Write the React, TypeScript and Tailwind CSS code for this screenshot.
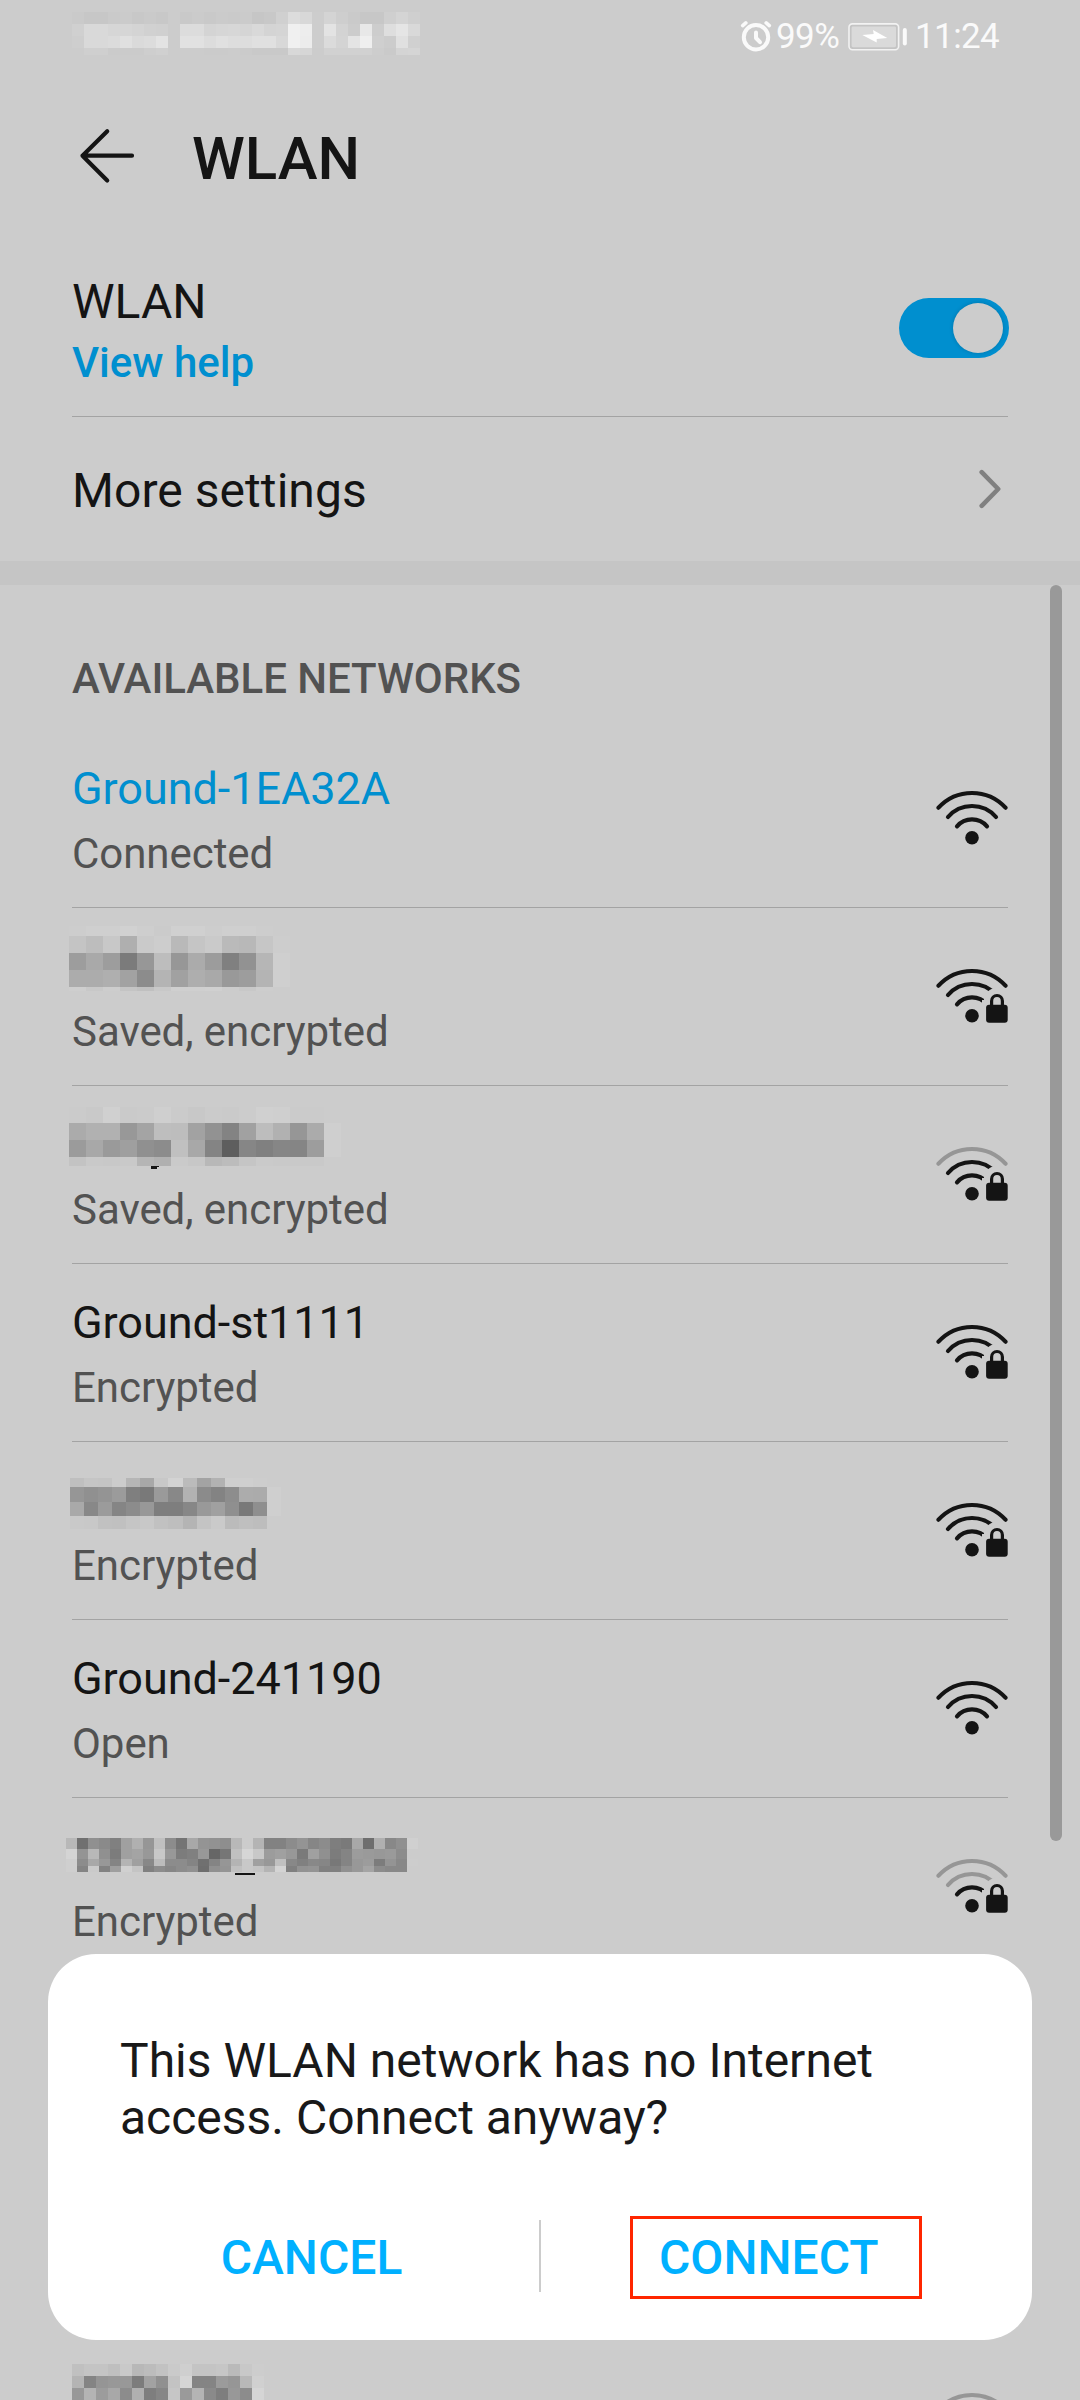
import React from "react";

type MosaicRow = { y: number; h: number; tones: string };
type MosaicData = { x: number; cell: number; rows: MosaicRow[]; marks?: { x: number; y: number; w: number; h: number }[] };

const statusMosaic: MosaicData = {
  x: 0,
  cell: 12,
  rows: [
    { y: 12, h: 12, tones: "ca c7 c7 ca cb c8 ca c8 cc c9 cb c9 cb ca cb c6 c8 d0 dc d8 cd d4 ce ca c7 c7 cf d4 cf" },
    { y: 24, h: 12, tones: "d0 d9 d9 d6 d6 d4 d1 d0 cc dc dc d4 d6 d7 d5 d9 d4 d5 f0 ed cd e3 d3 cc e8 cd de e5 d9" },
    { y: 36, h: 12, tones: "ce d9 d9 db e0 da dc e3 cc e1 e1 dc e0 dd dd e0 e0 d8 f0 ec cd db d4 e4 ef cf cc e0 d0" },
    { y: 48, h: 7, tones: "cc cf cf cb cb cb ce d0 cc cc cc cb cb cc cb c9 c9 c9 d8 d6 cc d1 d1 d1 d1 cd ca d4 d5" },
  ],
};

const mosaicA: MosaicData = {
  x: -3,
  cell: 17,
  rows: [
    { y: -14, h: 10, tones: "cd cf cf d1 ce cb d0 d0 cd cf cf cd cc" },
    { y: -4, h: 17, tones: "c4 bd c8 af ca cd b9 c5 ca ba b8 c6 cd" },
    { y: 13, h: 17, tones: "9d a9 9d 7b 97 bd 97 ab 9c 80 92 b6 cf" },
    { y: 30, h: 17, tones: "ac ac af a2 8c b4 a1 ae a9 99 9d b4 cf" },
    { y: 47, h: 4, tones: "ce c8 cd c4 c0 c8 cf cf d0 cc c8 cd cc" },
  ],
};

const mosaicB: MosaicData = {
  x: -3,
  cell: 17,
  rows: [
    { y: -11, h: 16, tones: "cb c9 d0 ca cb cf cb c8 cb ca cc d0 cf cb cb cc" },
    { y: 5, h: 17, tones: "ab b1 b1 98 a4 be bd a2 92 83 a1 bd b1 96 ab cf" },
    { y: 22, h: 17, tones: "9b a8 9a 9f 90 8c c0 a8 84 5e 86 80 86 85 9d cf" },
    { y: 39, h: 9, tones: "c3 c9 c8 c9 b5 b0 ca c7 b8 bc c5 ca c9 c9 c9 cc" },
  ],
  marks: [
    { x: 79, y: 48, w: 8, h: 1 },
    { x: 79, y: 49, w: 6, h: 2 },
  ],
};

const mosaicC: MosaicData = {
  x: -2,
  cell: 14.07,
  rows: [
    { y: 4, h: 9, tones: "bf c5 c4 cc b6 a8 c8 d3 bb a3 b2 cf cf cd cc" },
    { y: 13, h: 15, tones: "96 90 94 9b 7f 79 9a 88 b2 8b 83 8d ac ab cf" },
    { y: 28, h: 14, tones: "a9 88 9b 85 8c 98 7e 7e 87 99 a0 8f 79 8f cf" },
    { y: 42, h: 13, tones: "c9 c8 c1 c0 c5 c8 c1 be b4 c4 ca bb bf bd cc" },
  ],
};

const mosaicD: MosaicData = {
  x: -6,
  cell: 11,
  rows: [
    { y: 8, h: 11, tones: "b8 70 90 8a 80 a0 b0 96 c0 8c 74 a8 94 92 8e b8 cc b4 82 82 8c 94 86 8c 7e 7a a8 6e b0 88 90 d0" },
    { y: 19, h: 10, tones: "d4 94 b8 90 7c a0 a4 98 c8 98 7c 80 98 66 76 c0 d6 c8 9c a0 98 7a a0 90 7c 84 9c 9a 98 9a 8c cc" },
    { y: 29, h: 7, tones: "cf 8c a8 98 84 b4 a0 88 bc 8c 8c 84 70 84 96 b4 c8 a0 98 c0 88 80 88 86 78 84 98 9c 7c 94 88 cd" },
    { y: 36, h: 6, tones: "cf 84 ca 82 9e d0 c4 80 8c 86 8c 90 6e 90 94 c0 c8 c4 b4 d4 80 92 94 80 80 90 98 a4 8c 88 88 cc" },
  ],
  marks: [{ x: 163, y: 43, w: 20, h: 2 }],
};

const mosaicE: MosaicData = {
  x: 0,
  cell: 12,
  rows: [
    { y: 0, h: 12, tones: "c0 c4 c4 bf c9 b8 bc c2 ca cf c4 c4 c6 ba c8 cd" },
    { y: 12, h: 12, tones: "b4 84 95 98 98 7c a2 90 c3 d5 84 84 9b 96 b8 d0" },
    { y: 24, h: 12, tones: "98 b4 9c a8 8c b0 7e 86 c6 9a b4 8a 7e 98 8c d5" },
  ],
};

function Mosaic({ data }: { data: MosaicData }) {
  return (
    <svg className="block h-[54px] w-[400px] overflow-visible" shapeRendering="crispEdges" aria-hidden>
      {data.rows.map((row) =>
        row.tones.split(" ").map((t, i) => (
          <rect key={`${row.y}-${i}`} x={data.x + i * data.cell} y={row.y} width={data.cell} height={row.h} fill={`#${t}${t}${t}`} />
        )),
      )}
      {data.marks?.map((m, i) => (
        <rect key={i} x={m.x} y={m.y} width={m.w} height={m.h} fill="#141414" />
      ))}
    </svg>
  );
}

const ON = "#141414";
const DIM = "#969696";

function WifiIcon({ level, locked }: { level: number; locked: boolean }) {
  return (
    <svg className="h-[72px] w-[72px] shrink-0" viewBox="0 0 72 72" fill="none" strokeWidth="4.2" strokeLinecap="round">
      <path d="M2.5 24.7A45.5 45.5 0 0 1 69.5 24.7" stroke={level >= 3 ? ON : DIM} />
      <path d="M12 34A31.7 31.7 0 0 1 60 34" stroke={level >= 2 ? ON : DIM} />
      <path d="M21 43.3A19.6 19.6 0 0 1 51 43.3" stroke={level >= 1 ? ON : DIM} />
      <circle cx="36" cy="54.7" r="6.8" fill={ON} />
      {locked && (
        <>
          <circle cx="61" cy="40" r="13.2" fill="#cccccc" />
          <path d="M46 39h26v24H46z" fill="#cccccc" />
          <path d="M55.6 46V39.9a5.4 5.4 0 0 1 10.8 0V46" stroke={ON} strokeWidth="3.2" />
          <rect x="50.1" y="43.8" width="21.6" height="18" rx="3" fill={ON} />
        </>
      )}
    </svg>
  );
}

type Network = { name?: string; mosaic?: MosaicData; status: string; level: number; locked: boolean; active?: boolean };

const networks: Network[] = [
  { name: "Ground-1EA32A", status: "Connected", level: 3, locked: false, active: true },
  { mosaic: mosaicA, status: "Saved, encrypted", level: 3, locked: true },
  { mosaic: mosaicB, status: "Saved, encrypted", level: 2, locked: true },
  { name: "Ground-st1111", status: "Encrypted", level: 3, locked: true },
  { mosaic: mosaicC, status: "Encrypted", level: 3, locked: true },
  { name: "Ground-241190", status: "Open", level: 3, locked: false },
  { mosaic: mosaicD, status: "Encrypted", level: 1, locked: true },
  { status: "", level: 1, locked: true },
  { status: "", level: 1, locked: true },
  { mosaic: mosaicE, status: "", level: 0, locked: true },
];

function NetworkRow({ net }: { net: Network }) {
  return (
    <li className="flex h-[178px] shrink-0 items-center justify-between border-b border-[#a3a3a3]">
      <div className="flex h-full flex-col gap-[13px] pt-8">
        {net.mosaic ? (
          <Mosaic data={net.mosaic} />
        ) : (
          <div className={net.active ? "h-[54px] text-[45px] leading-[54px] tracking-[-0.05px] text-[#008fcf]" : "h-[54px] text-[45px] leading-[54px] tracking-[-0.05px] text-[#141414]"}>
            {net.name}
          </div>
        )}
        <div className="text-[42px] leading-[50px] tracking-[-0.05px] text-[#525252]">{net.status}</div>
      </div>
      <WifiIcon level={net.level} locked={net.locked} />
    </li>
  );
}

function StatusBar() {
  return (
    <div className="flex h-[72px] items-start justify-between pl-[72px]">
      <Mosaic data={statusMosaic} />
      <div className="flex h-[72px] w-[341px] shrink-0 items-start text-[#fafafa]">
        <svg className="mt-4 h-[42px] w-9" viewBox="0 16 36 42" fill="none" stroke="#fafafa" strokeWidth="4" strokeLinecap="round">
          <circle cx="17" cy="37.2" r="12.2" />
          <path d="M17 32.5V38l4 4.2" strokeLinejoin="round" />
          <path d="M3.7 25.6 6.8 22.9M27.2 22.9 30.3 25.6" strokeWidth="3.6" />
        </svg>
        <span className="mt-4 w-[72px] pl-px text-[35px] leading-[42px] tracking-[-0.6px]">99%</span>
        <svg className="mt-[22px] h-[30px] w-[60px]" viewBox="0 0 60 30">
          <rect x="2" y="1.9" width="49.6" height="25.8" rx="3.4" fill="#c4c4c4" stroke="#f2f2f2" strokeWidth="1.6" />
          <rect x="4.6" y="4.4" width="44.4" height="20.8" rx="1.4" fill="#dadada" />
          <path d="M15.3 13 26.7 12 26 8 40.3 16 29.7 17 29.7 20.5z" fill="#ffffff" />
          <rect x="55.8" y="6" width="4" height="17.5" rx="2" fill="#fafafa" />
        </svg>
        <span className="ml-2 mt-4 text-[35px] leading-[42px] tracking-[-0.6px]">11:24</span>
      </div>
    </div>
  );
}

function Dialog() {
  return (
    <div role="dialog" className="absolute left-[48px] top-[1954px] flex h-[386px] w-[984px] flex-col rounded-[48px] bg-white px-9 pt-[78px]">
      <p className="h-[184px] px-9 text-[48px] leading-[57px] text-[#191919]">
        This WLAN network has no Internet
        <br />
        access. Connect anyway?
      </p>
      <div className="flex items-start text-[48px] font-medium leading-[56px] text-[#00b0ff]">
        <button className="w-[455px] pt-[14px]">CANCEL</button>
        <div className="mt-1 h-[72px] w-[2px] bg-[#cccccc]" />
        <button className="ml-[89px] flex h-[83px] w-[292px] items-start border-[3px] border-[#ff2600] pl-[26px] pt-[11px]">
          CONNECT
        </button>
      </div>
    </div>
  );
}

export default function App() {
  return (
    <div className="relative flex h-[2400px] w-[1080px] flex-col overflow-hidden bg-[#cccccc] font-['Roboto',sans-serif] text-[#141414]">
      <StatusBar />
      <header className="flex h-[168px] shrink-0 items-center gap-[54px] pl-[78px]">
        <svg className="h-[60px] w-[60px]" viewBox="0 0 60 60" fill="none" stroke="#141414" strokeWidth="4.2" strokeLinecap="round" strokeLinejoin="round">
          <path d="M54 29.7H4.5M29.2 5.2 4.5 29.7 29.2 54.5" />
        </svg>
        <h1 className="pt-[5px] text-[60px] font-medium leading-[70px]">WLAN</h1>
      </header>

      <section className="flex shrink-0 flex-col px-[72px]">
        <div className="flex h-[177px] items-start justify-between border-b border-[#a3a3a3]">
          <div className="flex flex-col gap-2 pt-[34px]">
            <span className="text-[48px] leading-[56px]">WLAN</span>
            <a className="text-[42px] font-medium leading-[50px] text-[#008fcf]">View help</a>
          </div>
          <div className="-mr-px mt-[58px] flex h-[60px] w-[110px] items-center justify-end rounded-full bg-[#008fcf] pr-[6px]">
            <div className="h-[50px] w-[50px] rounded-full bg-[#cccccc] shadow-[0_0_4px_rgba(0,0,0,0.18)]" />
          </div>
        </div>
        <div className="flex h-[144px] items-center justify-between">
          <span className="pt-1 text-[48px] leading-[56px] tracking-[0.06px]">More settings</span>
          <svg className="mr-[5px] h-[42px] w-[24px]" viewBox="0 0 24 42" fill="none" stroke="#808080" strokeWidth="4.6" strokeLinecap="round" strokeLinejoin="round">
            <path d="M2.7 4.2 19.2 21 2.7 37.8" />
          </svg>
        </div>
      </section>
      <div className="h-6 shrink-0 bg-[#c5c5c5]" />

      <section className="flex flex-col px-[72px]">
        <h2 className="h-[145px] shrink-0 pt-[69px] text-[42px] font-medium leading-[50px] tracking-[-0.05px] text-[#525252]">AVAILABLE NETWORKS</h2>
        <ul className="flex flex-col">
          {networks.map((n, i) => (
            <NetworkRow key={i} net={n} />
          ))}
        </ul>
      </section>

      <div className="absolute left-[1050px] top-[585px] h-[1256px] w-3 rounded-full bg-[#999999]" />
      <Dialog />
    </div>
  );
}
